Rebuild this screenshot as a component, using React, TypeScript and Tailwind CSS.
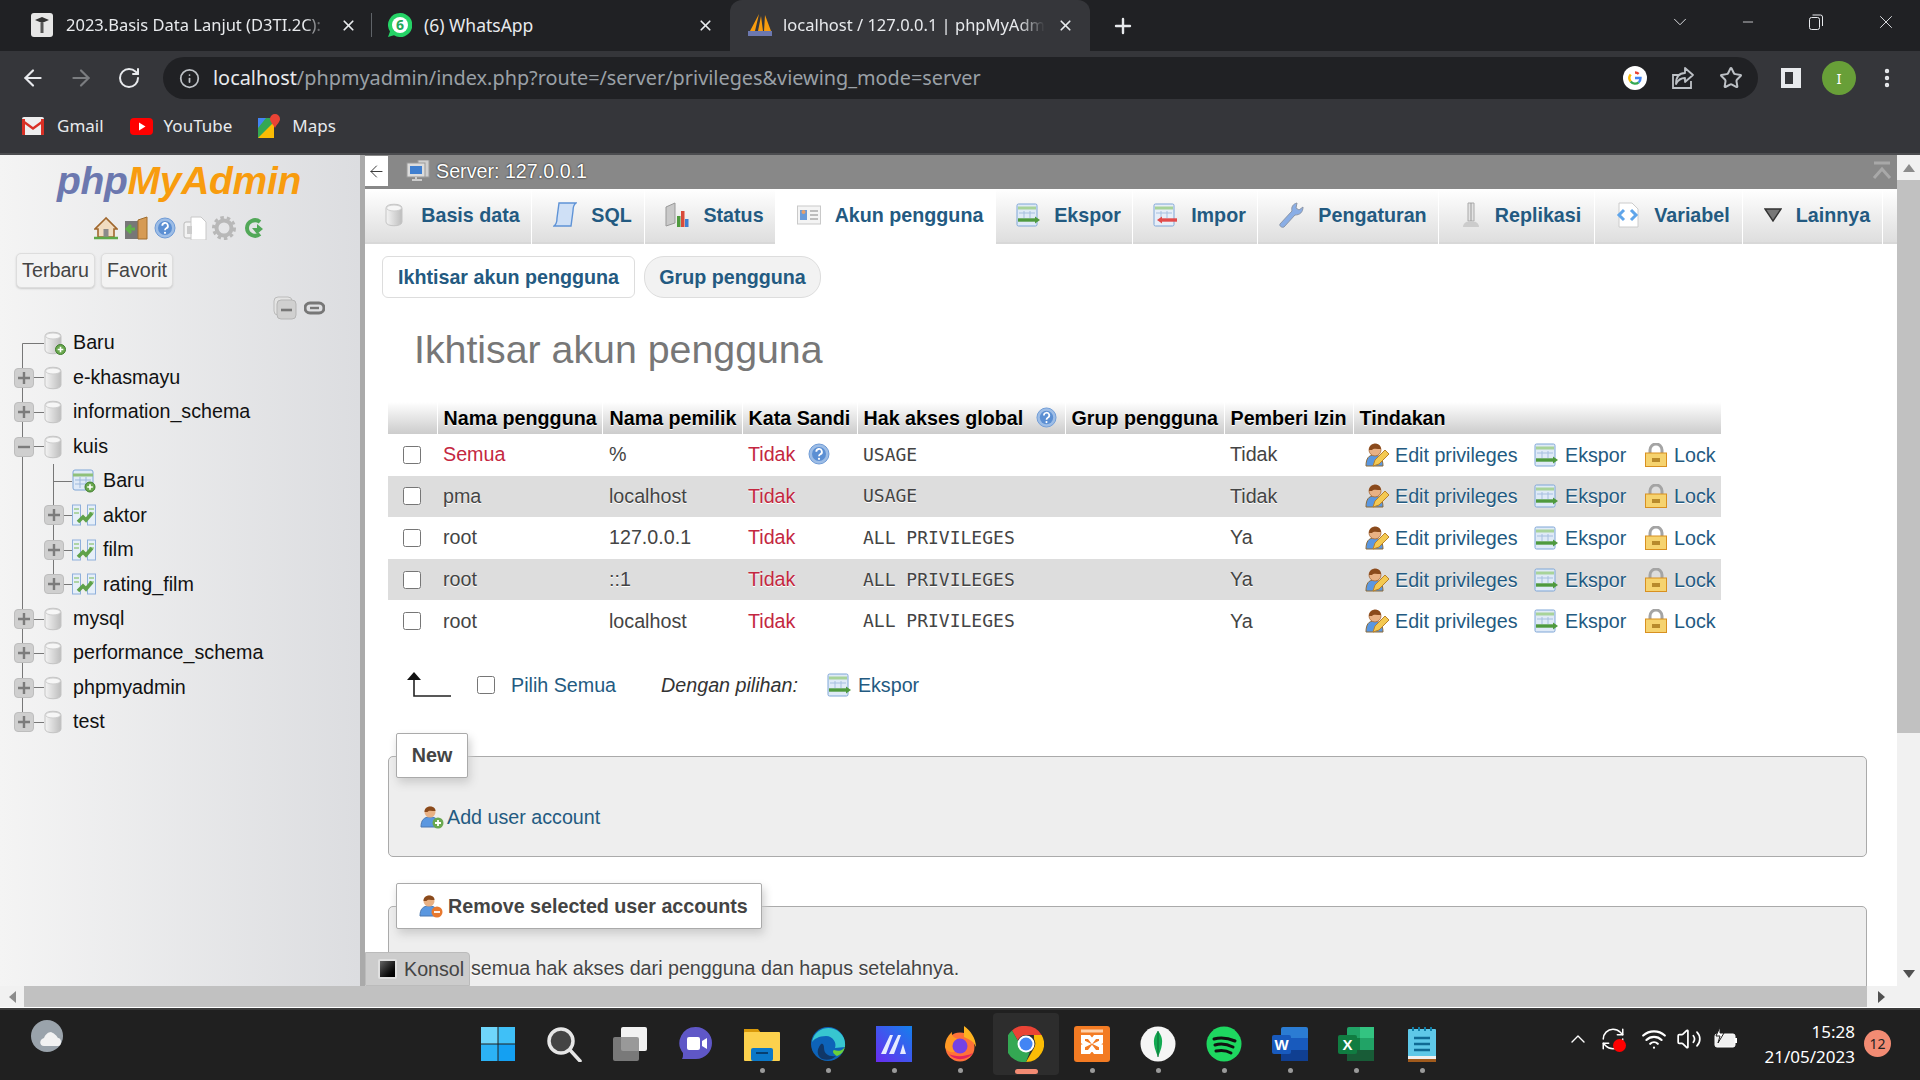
import { X, Plus, ChevronDown, Minus, ArrowLeft, ArrowRight, RotateCw, Info, Star, EllipsisVertical, ChevronUp, Wifi, Volume2, RefreshCw } from 'lucide-react';

const link = 'text-[#235a81]';

function Db({ plus = false }: { plus?: boolean }) {
  return (
    <svg width="22" height="24" viewBox="0 0 22 24" className="shrink-0">
      <defs>
        <linearGradient id="dbg" x1="0" x2="1" y1="0" y2="0">
          <stop offset="0" stopColor="#f4f4f4" />
          <stop offset="1" stopColor="#bdbdbd" />
        </linearGradient>
      </defs>
      <path d="M1 5c0-5 16-5 16 0v14c0 5-16 5-16 0z" fill="url(#dbg)" stroke="#c4c4c4" />
      <ellipse cx="9" cy="5" rx="7.5" ry="3" fill="#f6f6f6" stroke="#cfcfcf" />
      {plus && <circle cx="16.5" cy="18.5" r="5" fill="#6aa84f" stroke="#3f7d2c" />}
      {plus && <path d="M16.5 15.7v5.6M13.7 18.5h5.6" stroke="#fff" strokeWidth="1.6" />}
    </svg>
  );
}

function NewTable() {
  return (
    <svg width="24" height="24" viewBox="0 0 24 24" className="shrink-0">
      <rect x="1" y="1" width="20" height="20" rx="2" fill="#dfeaf7" stroke="#7fa6d6" />
      <path d="M1 6h20" stroke="#8fc07a" strokeWidth="3" />
      <path d="M3 11h16M3 15h16M8 8v11M14 8v11" stroke="#9db9dc" />
      <circle cx="18" cy="18" r="5" fill="#6aa84f" stroke="#3f7d2c" />
      <path d="M18 15.2v5.6M15.2 18h5.6" stroke="#fff" strokeWidth="1.6" />
    </svg>
  );
}

function ViewIcon() {
  return (
    <svg width="24" height="24" viewBox="0 0 24 24" className="shrink-0">
      <rect x="0.5" y="2" width="8" height="20" fill="#e6eff9" stroke="#8fb0dc" />
      <rect x="15.5" y="2" width="8" height="20" fill="#e6eff9" stroke="#8fb0dc" />
      <path d="M2 6h5M17 6h5M2 10h5M17 10h5" stroke="#9ccc8b" strokeWidth="1.4" />
      <path d="M6 19l5-5 3 3 6-7" fill="none" stroke="#5fa24a" strokeWidth="3.6" />
    </svg>
  );
}

function Expander({ open = false }: { open?: boolean }) {
  return (
    <span className="relative z-10 flex h-[20px] w-[20px] items-center justify-center rounded-[4px] border border-[#bdbdbd] bg-[#cfcfcf]">
      <svg width="12" height="12" viewBox="0 0 12 12">
        <path d={open ? 'M0 6h12' : 'M0 6h12M6 0v12'} stroke="#7c7c7c" strokeWidth="2.4" />
      </svg>
    </span>
  );
}

type TreeRow = { name: string; kind: 'newdb' | 'db' | 'open' | 'newtable' | 'view'; last?: boolean };

const tree: TreeRow[] = [
  { name: 'Baru', kind: 'newdb' },
  { name: 'e-khasmayu', kind: 'db' },
  { name: 'information_schema', kind: 'db' },
  { name: 'kuis', kind: 'open' },
  { name: 'Baru', kind: 'newtable' },
  { name: 'aktor', kind: 'view' },
  { name: 'film', kind: 'view' },
  { name: 'rating_film', kind: 'view', last: true },
  { name: 'mysql', kind: 'db' },
  { name: 'performance_schema', kind: 'db' },
  { name: 'phpmyadmin', kind: 'db' },
  { name: 'test', kind: 'db', last: true },
];

function Guides({ row }: { row: TreeRow }) {
  const nested = row.kind === 'newtable' || row.kind === 'view';
  return (
    <svg width="72" height="35" viewBox="0 0 72 35" className="absolute left-0 top-0">
      <path
        d={row.kind === 'newdb' ? 'M22.5 17.5V35' : row.kind === 'db' && row.last ? 'M22.5 0V17.5' : 'M22.5 0V35'}
        stroke="#777"
        fill="none"
      />
      {!nested && <path d="M22.5 17.5H44" stroke="#777" />}
      {nested && <path d={row.last ? 'M53.5 0V17.5' : 'M53.5 0V35'} stroke="#777" />}
      {nested && <path d="M53.5 17.5H72" stroke="#777" />}
    </svg>
  );
}

function Sidebar() {
  return (
    <aside className="w-[365px] shrink-0 border-r-[5px] border-[#aaaaaa] bg-linear-to-r from-[#f4f4f4] to-[#dcdde0]">
      <div className="h-[53px] pl-[57px] pt-[3px] text-[39px] leading-[46px] font-bold italic tracking-[-0.3px]">
        <span className="text-[#6c78af]">php</span>
        <span className="text-[#f89c0e]">MyAdmin</span>
      </div>
      <div className="flex h-[45px] items-center pb-[5px] pl-[94px]">
        <svg width="24" height="24" viewBox="0 0 24 24" className="mr-[6px]">
          <path d="M12 2L1 13h3v8h16v-8h3z" fill="#f1dcc0" stroke="#a0672d" strokeWidth="1.6" />
          <rect x="9.5" y="13" width="5" height="8" fill="#8a8a8a" />
          <path d="M0 22h24" stroke="#5ea849" strokeWidth="2.5" />
        </svg>
        <svg width="24" height="24" viewBox="0 0 24 24" className="mr-[6px]">
          <rect x="1" y="5" width="14" height="18" fill="#777" />
          <path d="M14 4l9-3v22h-9z" fill="#d69b54" stroke="#a06c2c" />
          <path d="M11 13H3M7 9l-4 4 4 4" stroke="#5fb04a" strokeWidth="3" fill="none" />
        </svg>
        <HelpIcon size={22} className="mr-[7px]" />
        <svg width="24" height="24" viewBox="0 0 24 24" className="mr-[5px]">
          <rect x="1" y="6" width="12" height="16" rx="2" fill="#f3f3f3" stroke="#bbb" />
          <path d="M8 1h10l5 5v18H8z" fill="#fff" stroke="#c8c8c8" />
          <rect x="4" y="10" width="5" height="8" fill="#ccc" />
        </svg>
        <svg width="24" height="24" viewBox="0 0 24 24" className="mr-[8px]">
          <circle cx="12" cy="12" r="7.5" fill="none" stroke="#b8b8b8" strokeWidth="4" />
          <circle cx="12" cy="12" r="10.5" fill="none" stroke="#b8b8b8" strokeWidth="3" strokeDasharray="3.5 3" />
        </svg>
        <svg width="20" height="22" viewBox="0 0 20 22">
          <path d="M16 5A8 8 0 0 0 3 11a8 8 0 0 0 13 6" fill="none" stroke="#52a858" strokeWidth="4" />
          <path d="M8 11h5v-4l6 5-6 5z" fill="#52a858" />
        </svg>
      </div>
      <div className="flex gap-[6px] pl-[16px] text-[19.7px] text-[#444]">
        <span className="flex h-[35px] w-[79px] items-center justify-center rounded-[5px] border border-[#ddd] bg-[#f3f3f3] shadow-[0_1px_2px_#ccc]">Terbaru</span>
        <span className="flex h-[35px] w-[72px] items-center justify-center rounded-[5px] border border-[#ddd] bg-[#f3f3f3] shadow-[0_1px_2px_#ccc]">Favorit</span>
      </div>
      <div className="flex h-[40px] items-center gap-[7px] pl-[273px]">
        <svg width="24" height="24" viewBox="0 0 24 24">
          <rect x="1" y="1" width="18" height="18" rx="4" fill="#e4e4e4" stroke="#bbb" />
          <rect x="4" y="4" width="19" height="19" rx="4" fill="#d0d0d0" stroke="#b5b5b5" />
          <path d="M8 14h11" stroke="#777" strokeWidth="2.6" />
        </svg>
        <svg width="21" height="14" viewBox="0 0 21 14">
          <rect x="1" y="2" width="19" height="10" rx="5" fill="none" stroke="#777" strokeWidth="3" />
          <path d="M6 7h9" stroke="#777" strokeWidth="2.4" />
        </svg>
      </div>
      <div className="-mt-[2px] text-[19.7px] text-[#111]">
        {tree.map((row, i) => {
          const nested = row.kind === 'newtable' || row.kind === 'view';
          return (
            <div key={i} className="relative flex h-[34.45px] items-center">
              <Guides row={row} />
              <div className="flex w-[44px] shrink-0 justify-end pr-[10px]">
                {(row.kind === 'db' || row.kind === 'open') && <Expander open={row.kind === 'open'} />}
              </div>
              {nested && (
                <div className="flex w-[28px] shrink-0">
                  {row.kind === 'view' && <Expander />}
                </div>
              )}
              <div className={nested ? 'relative w-[31px]' : 'relative w-[29px]'}>
                {row.kind === 'newdb' && <Db plus />}
                {(row.kind === 'db' || row.kind === 'open') && <Db />}
                {row.kind === 'newtable' && <NewTable />}
                {row.kind === 'view' && <ViewIcon />}
              </div>
              <span className="relative">{row.name}</span>
            </div>
          );
        })}
      </div>
    </aside>
  );
}

function HelpIcon({ size = 22, className = '' }: { size?: number; className?: string }) {
  return (
    <svg width={size} height={size} viewBox="0 0 22 22" className={`shrink-0 ${className}`}>
      <circle cx="11" cy="11" r="10" fill="#9dbde6" stroke="#6f9bd6" />
      <circle cx="11" cy="11" r="7" fill="#5b8fd3" />
      <path d="M8.3 8.8a2.8 2.8 0 1 1 4 2.5c-1 .6-1.3 1-1.3 2" fill="none" stroke="#fff" strokeWidth="1.8" />
      <circle cx="11" cy="15.8" r="1.1" fill="#fff" />
    </svg>
  );
}

function ExportIcon() {
  return (
    <svg width="24" height="24" viewBox="0 0 24 24" className="shrink-0">
      <rect x="1" y="1" width="20" height="22" rx="1.5" fill="#dfeaf7" stroke="#7fa6d6" />
      <path d="M2 5h18" stroke="#a8d39a" strokeWidth="3" />
      <path d="M3 10h16M8 8v7M14 8v7" stroke="#a6bfdf" />
      <path d="M2 17h17" stroke="#4f9a3e" strokeWidth="3.4" />
      <path d="M19 13.5l5 3.5-5 3.5z" fill="#4f9a3e" />
    </svg>
  );
}

function EditIcon() {
  return (
    <svg width="24" height="24" viewBox="0 0 24 24" className="shrink-0">
      <path d="M1 23c0-8 3-11 8-11s9 3 9 11z" fill="#5a97e0" stroke="#8a6a3a" />
      <circle cx="10" cy="7" r="6" fill="#e9b184" stroke="#a56a3a" strokeWidth="0.8" />
      <path d="M4 7c0-8 12-8 12-1-4 0-8-1-9 1z" fill="#8a4a1c" />
      <path d="M8 23l2-6 10-10 4 4-10 10z" fill="#f4c951" stroke="#b9812a" />
    </svg>
  );
}

function LockIcon() {
  return (
    <svg width="22" height="24" viewBox="0 0 22 24" className="shrink-0">
      <path d="M5 12V7a6 6 0 0 1 12 0v5" fill="none" stroke="#a4a4a4" strokeWidth="3" />
      <rect x="0.5" y="10" width="21" height="13.5" fill="#f6d36f" stroke="#d89020" />
      <rect x="7" y="15" width="8" height="4" fill="#b88a2c" />
    </svg>
  );
}

function UserIcon({ badge }: { badge: string }) {
  return (
    <svg width="24" height="24" viewBox="0 0 24 24" className="shrink-0">
      <path d="M1 22c0-7 3-10 9-10s9 3 9 10z" fill="#5a97e0" stroke="#4a77b0" />
      <circle cx="10" cy="7" r="5.5" fill="#e9b184" />
      <path d="M4.5 7c0-7 11-7 11-1-4 0-7-1-8 1z" fill="#8a4a1c" />
      <circle cx="18" cy="18" r="5.5" fill={badge} />
      <path d={badge === '#6aa84f' ? 'M18 15v6M15 18h6' : 'M15 18h6'} stroke="#fff" strokeWidth="1.8" />
    </svg>
  );
}

const navTabs = [
  { label: 'Basis data', w: 'w-[167px]', icon: 'db' },
  { label: 'SQL', w: 'w-[113px]', icon: 'sql' },
  { label: 'Status', w: 'w-[131px]', icon: 'status' },
  { label: 'Akun pengguna', w: 'w-[220px]', icon: 'user', active: true },
  { label: 'Ekspor', w: 'w-[137px]', icon: 'export' },
  { label: 'Impor', w: 'w-[125px]', icon: 'import' },
  { label: 'Pengaturan', w: 'w-[181px]', icon: 'wrench' },
  { label: 'Replikasi', w: 'w-[156px]', icon: 'rep' },
  { label: 'Variabel', w: 'w-[148px]', icon: 'var' },
  { label: 'Lainnya', w: 'w-[140px]', icon: 'more' },
];

function NavIcon({ name }: { name: string }) {
  if (name === 'db') return <Db />;
  if (name === 'export') return <ExportIcon />;
  if (name === 'sql')
    return (
      <svg width="24" height="26" viewBox="0 0 24 26" className="shrink-0">
        <path d="M6 1h17c-3 2-3 5-3 8l-2 15H1c3-2 3-5 3-8z" fill="#cfe0f6" stroke="#5f93d6" strokeWidth="1.4" />
      </svg>
    );
  if (name === 'status')
    return (
      <svg width="24" height="26" viewBox="0 0 24 26" className="shrink-0">
        <path d="M1 5l9-4v20l-9 3z" fill="#c9c9c9" stroke="#999" />
        <rect x="12" y="14" width="3.5" height="11" fill="#4f9a3e" />
        <rect x="16" y="9" width="3.5" height="16" fill="#d94a3a" />
        <rect x="20" y="17" width="3.5" height="8" fill="#3f7fd0" />
      </svg>
    );
  if (name === 'user')
    return (
      <svg width="24" height="20" viewBox="0 0 24 20" className="shrink-0">
        <rect x="0.5" y="1" width="23" height="18" fill="#f4f4f4" stroke="#c9c9c9" />
        <rect x="3" y="5" width="7" height="10" fill="#6b9bd8" />
        <circle cx="6.5" cy="7" r="2" fill="#e9a06a" />
        <path d="M13 6h8M13 10h8M13 14h8" stroke="#aaa" strokeWidth="1.6" />
      </svg>
    );
  if (name === 'import')
    return (
      <svg width="24" height="24" viewBox="0 0 24 24" className="shrink-0">
        <rect x="1" y="1" width="20" height="22" rx="1.5" fill="#e7eef8" stroke="#7fa6d6" />
        <path d="M2 5h18" stroke="#a8d39a" strokeWidth="3" />
        <path d="M3 10h16M8 8v7M14 8v7" stroke="#a6bfdf" />
        <path d="M9 17h15" stroke="#e24a4a" strokeWidth="3.4" />
        <path d="M9 13.5l-5 3.5 5 3.5z" fill="#e24a4a" />
      </svg>
    );
  if (name === 'wrench')
    return (
      <svg width="26" height="26" viewBox="0 0 26 26" className="shrink-0">
        <path d="M2 22L14 9c-1-4 1-7 5-8l-1 5 3 2 4-3c0 5-3 8-8 8L6 25c-2 1-5-1-4-3z" fill="#8aaee6" stroke="#8b96a8" />
      </svg>
    );
  if (name === 'rep')
    return (
      <svg width="20" height="26" viewBox="0 0 20 26" className="shrink-0">
        <path d="M7 1h6v18H7z" fill="#e3e3e3" stroke="#aaa" />
        <path d="M10 1v18" stroke="#999" />
        <path d="M2 25c0-4 4-6 8-6s8 2 8 6z" fill="#ccc" />
      </svg>
    );
  if (name === 'var')
    return (
      <svg width="24" height="26" viewBox="0 0 24 26" className="shrink-0">
        <path d="M3 1h13l6 6v18H3z" fill="#fff" stroke="#ccc" />
        <path d="M8 8l-5 5 5 5M15 8l5 5-5 5" fill="none" stroke="#5fa5ea" strokeWidth="3" />
      </svg>
    );
  return (
    <svg width="18" height="14" viewBox="0 0 18 14" className="shrink-0">
      <path d="M1 1h16L9 13z" fill="#777" stroke="#333" strokeWidth="1.4" />
    </svg>
  );
}

function Main() {
  return (
    <main className="relative flex w-[1532px] flex-col overflow-hidden bg-white text-[19.7px] leading-[24px] text-[#444]">
      <div className="flex h-[34px] shrink-0 items-center bg-[#888888] pb-[2px] text-white [text-shadow:0_0_2px_#000]">
        <span className="flex h-[30px] w-[23px] items-center justify-center bg-white text-[#333]">
          <ArrowLeft size={19} strokeWidth={1.2} />
        </span>
        <svg width="24" height="22" viewBox="0 0 24 22" className="ml-[18px]">
          <rect x="12" y="0" width="11" height="17" fill="#cfcfcf" stroke="#999" />
          <rect x="1" y="3" width="18" height="14" fill="#dcdcdc" stroke="#999" />
          <rect x="4" y="6" width="12" height="8" fill="#3f7fd0" />
          <path d="M6 20h10M10 17v3" stroke="#ccc" strokeWidth="2" />
        </svg>
        <span className="ml-[6px]">Server: 127.0.0.1</span>
        <svg width="20" height="20" viewBox="0 0 20 20" className="ml-auto mr-[5px]">
          <path d="M2 2h16" stroke="#a8a8a8" strokeWidth="3" />
          <path d="M2 17l8-9 8 9" stroke="#a8a8a8" strokeWidth="3" fill="none" />
        </svg>
      </div>
      <nav className="flex h-[55px] shrink-0 border-b-2 border-[#d8d8d8] bg-linear-to-b from-white to-[#dedede] font-bold text-[#235a81]">
        {navTabs.map((t) => (
          <div
            key={t.label}
            className={`${t.w} flex h-[55px] shrink-0 items-center justify-center gap-[14px] border-r border-white pb-[4px] pl-[9px] ${t.active ? 'bg-white' : ''}`}
          >
            <NavIcon name={t.icon} />
            <span>{t.label}</span>
          </div>
        ))}
      </nav>
      <div className="ml-[17px] mt-[12px] flex shrink-0 gap-[9px] font-bold text-[#235a81]">
        <span className="flex h-[42px] w-[253px] items-center justify-center rounded-[6px] border border-[#dddddd] bg-white">Ikhtisar akun pengguna</span>
        <span className="flex h-[42px] w-[177px] items-center justify-center rounded-[20px] border border-[#dddddd] bg-[#f2f2f2]">Grup pengguna</span>
      </div>
      <h1 className="ml-[49px] mt-[28px] shrink-0 text-[39.3px] leading-[46px] font-normal text-[#777777]">Ikhtisar akun pengguna</h1>
      <table className="ml-[23px] mt-[30px] w-[1333px] shrink-0 table-fixed border-collapse">
        <colgroup>
          <col className="w-[49px]" />
          <col className="w-[165px]" />
          <col className="w-[140px]" />
          <col className="w-[115px]" />
          <col className="w-[208px]" />
          <col className="w-[159px]" />
          <col className="w-[129px]" />
          <col className="w-[368px]" />
        </colgroup>
        <thead>
          <tr className="h-[32px] bg-linear-to-b from-white to-[#cccccc] text-left font-bold text-black [text-shadow:0_1px_0_#fff]">
            <th className="border-r border-white pb-[1px]" />
            <th className="border-r border-white pb-[1px] pl-[6px] font-bold whitespace-nowrap">Nama pengguna</th>
            <th className="border-r border-white pb-[1px] pl-[7px] font-bold whitespace-nowrap">Nama pemilik</th>
            <th className="border-r border-white pb-[1px] pl-[6px] font-bold whitespace-nowrap">Kata Sandi</th>
            <th className="border-r border-white pb-[1px] pl-[6px] font-bold whitespace-nowrap">
              <span className="flex items-center gap-[13px]">Hak akses global <HelpIcon size={21} /></span>
            </th>
            <th className="border-r border-white pb-[1px] pl-[6px] font-bold whitespace-nowrap">Grup pengguna</th>
            <th className="border-r border-white pb-[1px] pl-[6px] font-bold whitespace-nowrap">Pemberi Izin</th>
            <th className="pb-[1px] pl-[6px] font-bold">Tindakan</th>
          </tr>
        </thead>
        <tbody>
          {[
            { user: 'Semua', host: '%', priv: 'USAGE', grant: 'Tidak', red: true, help: true },
            { user: 'pma', host: 'localhost', priv: 'USAGE', grant: 'Tidak' },
            { user: 'root', host: '127.0.0.1', priv: 'ALL PRIVILEGES', grant: 'Ya' },
            { user: 'root', host: '::1', priv: 'ALL PRIVILEGES', grant: 'Ya' },
            { user: 'root', host: 'localhost', priv: 'ALL PRIVILEGES', grant: 'Ya' },
          ].map((r, i) => (
            <tr key={i} className={`h-[41.6px] ${i % 2 === 1 ? 'bg-[#dddddd] [text-shadow:0_1px_0_#fff]' : ''}`}>
              <td className="pl-[15px]">
                <input type="checkbox" className="block h-[18px] w-[18px]" />
              </td>
              <td className={`pb-[1px] pl-[6px] ${r.red ? 'text-[#c4273f]' : ''}`}>{r.user}</td>
              <td className="pb-[1px] pl-[7px]">{r.host}</td>
              <td className="pb-[1px] pl-[6px] text-[#c4273f]">
                <span className="flex items-center gap-[13px]">Tidak {r.help && <HelpIcon size={22} />}</span>
              </td>
              <td className="pl-[6px] font-['DejaVu_Sans_Mono',monospace] text-[18px]">{r.priv}</td>
              <td />
              <td className="pb-[1px] pl-[6px]">{r.grant}</td>
              <td>
                <div className={`flex items-center pl-[12px] ${link}`}>
                  <span className="flex w-[169px] items-center gap-[6px]"><EditIcon />Edit privileges</span>
                  <span className="flex w-[111px] items-center gap-[7px]"><ExportIcon />Ekspor</span>
                  <span className="flex items-center gap-[7px]"><LockIcon />Lock</span>
                </div>
              </td>
            </tr>
          ))}
        </tbody>
      </table>
      <div className="ml-[42px] mt-[28px] flex h-[30px] shrink-0 items-center">
        <svg width="44" height="26" viewBox="0 0 44 26" className="mr-[26px]">
          <path d="M7 6v18h37" fill="none" stroke="#222" strokeWidth="1.6" />
          <path d="M0 8l7-8 7 8z" fill="#111" />
        </svg>
        <input type="checkbox" className="block h-[18px] w-[18px]" />
        <span className={`ml-[16px] ${link}`}>Pilih Semua</span>
        <span className="ml-[45px] italic text-[#333]">Dengan pilihan:</span>
        <span className={`ml-[29px] flex items-center gap-[7px] ${link}`}><ExportIcon />Ekspor</span>
      </div>
      <div className="ml-[23px] mt-[33px] w-[1479px] shrink-0">
        <div className="relative z-10 -mb-[22px] ml-[8px] flex h-[45px] w-[72px] items-center justify-center rounded-[2px] border border-[#aaaaaa] bg-white font-bold shadow-[2px_5px_10px_#ccc]">New</div>
        <div className={`flex h-[101px] items-start rounded-[5px] border border-[#aaaaaa] bg-[#eeeeee] pl-[31px] pt-[48px] ${link}`}>
          <span className="flex items-center gap-[3px]"><UserIcon badge="#6aa84f" />Add user account</span>
        </div>
      </div>
      <div className="ml-[23px] mt-[26px] w-[1479px] shrink-0">
        <div className="relative z-10 -mb-[23px] ml-[8px] flex h-[46px] w-[366px] items-center rounded-[2px] border border-[#aaaaaa] bg-white pl-[22px] font-bold shadow-[2px_5px_10px_#ccc]">
          <span className="flex items-center gap-[5px]"><UserIcon badge="#e8792f" />Remove selected user accounts</span>
        </div>
        <div className="h-[120px] rounded-[5px] border border-[#aaaaaa] bg-[#eeeeee] pl-[82px] pt-[49px] [text-shadow:0_1px_0_#fff]">
          semua hak akses dari pengguna dan hapus setelahnya.
        </div>
      </div>
      <div className="absolute bottom-0 left-0 flex h-[34px] w-[105px] items-center gap-[7px] rounded-tr-[4px] border border-[#bbbbbb] bg-[#cccccc] pl-[12px]">
        <span className="h-[20px] w-[19px] rounded-[2px] border-2 border-[#e0e0e0] bg-linear-to-br from-[#666] to-black" />
        <span>Konsol</span>
      </div>
    </main>
  );
}

function ChromeTabs() {
  return (
    <div className="flex h-[51px] shrink-0 items-end bg-[#202124] font-['Noto_Sans',sans-serif] text-[16.5px] text-[#e8eaed]">
      <div className="flex h-[51px] w-[371px] items-center pb-[1px] pl-[30px]">
        <svg width="24" height="24" viewBox="0 0 24 24" className="shrink-0">
          <rect x="1" y="0" width="22" height="24" rx="3" fill="#e6e6e6" />
          <path d="M5 7l7-3 7 3-7 3z" fill="#333" />
          <path d="M12 10v10" stroke="#555" strokeWidth="3" />
        </svg>
        <span className="ml-[12px] w-[260px] overflow-hidden whitespace-nowrap [mask-image:linear-gradient(to_right,black_92%,transparent)]">2023.Basis Data Lanjut (D3TI.2C):</span>
        <X size={17} strokeWidth={2.4} className="ml-[14px] shrink-0" />
      </div>
      <div className="mb-[14px] h-[24px] w-px bg-[#5f6368]" />
      <div className="flex h-[51px] w-[358px] items-center pb-[1px] pl-[16px]">
        <svg width="24" height="24" viewBox="0 0 24 24" className="shrink-0">
          <path d="M12 0a12 12 0 0 0-10 18.500L0 24l6-1.800A12 12 0 1 0 12 0z" fill="#25d366" />
          <circle cx="12" cy="12" r="8" fill="#fff" />
          <text x="12" y="17" textAnchor="middle" fontSize="14" fontWeight="700" fill="#25a85a">6</text>
        </svg>
        <span className="ml-[12px] text-[17.5px]">(6) WhatsApp</span>
        <X size={17} strokeWidth={2.4} className="ml-auto mr-[16px] shrink-0" />
      </div>
      <div className="flex h-[51px] w-[360px] items-center rounded-t-[12px] bg-[#35363a] pb-[1px] pl-[17px]">
        <svg width="26" height="24" viewBox="0 0 26 24" className="shrink-0">
          <path d="M12 1L3 18h5zM14 3l-3 15h5zM18 2l-1 16h7z" fill="#f89c0e" />
          <path d="M1 18h24v5H1z" fill="#6c78af" />
        </svg>
        <span className="ml-[10px] w-[262px] overflow-hidden whitespace-nowrap [mask-image:linear-gradient(to_right,black_90%,transparent)]">localhost / 127.0.0.1 | phpMyAdmin</span>
        <X size={17} strokeWidth={2.4} className="ml-[12px] shrink-0" />
      </div>
      <div className="flex h-[51px] w-[66px] items-center justify-center">
        <Plus size={24} strokeWidth={2.4} />
      </div>
      <div className="ml-auto flex h-[44px] items-center self-start text-[#e8eaed]">
        <ChevronDown size={22} strokeWidth={1} className="mr-[49px]" />
        <Minus size={16} strokeWidth={1.2} className="mr-[52px]" />
        <svg width="16" height="16" viewBox="0 0 16 16" className="mr-[51px]">
          <rect x="1.500" y="3.500" width="10" height="12" rx="2" fill="none" stroke="#e8eaed" />
          <path d="M4.500 1h8a2 2 0 0 1 2 2v9" fill="none" stroke="#e8eaed" />
        </svg>
        <X size={22} strokeWidth={1} className="mr-[23px]" />
      </div>
    </div>
  );
}

function Toolbar() {
  return (
    <div className="flex h-[54px] shrink-0 items-center bg-[#35363a] text-[#dadce0]">
      <div className="flex w-[163px] shrink-0 items-center pl-[20px]">
        <ArrowLeft size={26} strokeWidth={2} className="text-[#e8eaed]" />
        <ArrowRight size={26} strokeWidth={2} className="ml-[22px] text-[#7b7d80]" />
        <RotateCw size={24} strokeWidth={2} className="ml-[23px] text-[#e8eaed]" />
      </div>
      <div className="flex h-[42px] w-[1595px] items-center rounded-full bg-[#202124] pl-[16px] font-['Noto_Sans',sans-serif] text-[19.85px]">
        <Info size={21} strokeWidth={2} className="text-[#bdc1c6]" />
        <span className="ml-[13px] text-[#e8eaed]">localhost</span>
        <span className="text-[#9aa0a6]">/phpmyadmin/index.php?route=/server/privileges&amp;viewing_mode=server</span>
        <svg width="24" height="24" viewBox="0 0 24 24" className="ml-auto">
          <circle cx="12" cy="12" r="12" fill="#fff" />
          <path d="M12 6.500a5.500 5.500 0 0 1 3.700 1.400" fill="none" stroke="#ea4335" strokeWidth="2.400" />
          <path d="M7.700 8.500a5.500 5.500 0 0 0 0 7" fill="none" stroke="#fbbc05" strokeWidth="2.400" />
          <path d="M7.700 15.500a5.500 5.500 0 0 0 8 .8" fill="none" stroke="#34a853" strokeWidth="2.400" />
          <path d="M12 12h5.500c0 2-.6 3.300-1.800 4.300" fill="none" stroke="#4285f4" strokeWidth="2.400" />
        </svg>
        <svg width="24" height="24" viewBox="0 0 24 24" className="ml-[24px]">
          <path d="M20 15v7H2V9h6" fill="none" stroke="#bdc1c6" strokeWidth="1.8" />
          <path d="M14 2l8 7-8 7v-4c-5 0-7 2-9 6 0-7 3-11 9-11z" fill="none" stroke="#bdc1c6" strokeWidth="1.8" strokeLinejoin="round" />
        </svg>
        <Star size={24} strokeWidth={2} className="ml-[24px] mr-[15px] text-[#bdc1c6]" />
      </div>
      <svg width="22" height="22" viewBox="0 0 22 22" className="ml-[22px]">
        <path d="M1 1h20v20H1z" fill="#e8eaed" />
        <path d="M5 5h8v12H5z" fill="#35363a" />
      </svg>
      <span className="ml-[20px] flex h-[34px] w-[34px] items-center justify-center rounded-full bg-[#689f38] font-['Noto_Sans',sans-serif] text-[15px] text-white">I</span>
      <EllipsisVertical size={24} strokeWidth={2.4} className="ml-[19px] text-[#e8eaed]" />
    </div>
  );
}

function Bookmarks() {
  return (
    <div className="flex h-[50px] shrink-0 items-center border-b-2 border-[#4c4d50] bg-[#35363a] pb-[6px] pl-[22px] font-['Noto_Sans',sans-serif] text-[17px] text-[#e8eaed]">
      <svg width="22" height="18" viewBox="0 0 22 18">
        <rect y="0" width="22" height="18" rx="2" fill="#eee" />
        <path d="M0 2l11 8 11-8v3l-11 8L0 5z" fill="#d93025" />
        <path d="M0 2h3v16H1a1 1 0 0 1-1-1zM19 2h3v15a1 1 0 0 1-1 1h-2z" fill="#d93025" />
      </svg>
      <span className="ml-[13px]">Gmail</span>
      <svg width="23" height="17" viewBox="0 0 23 17" className="ml-[26px]">
        <rect width="23" height="17" rx="4" fill="#f00" />
        <path d="M9 4.500v8l6.500-4z" fill="#fff" />
      </svg>
      <span className="ml-[11px]">YouTube</span>
      <svg width="22" height="24" viewBox="0 0 22 24" className="ml-[26px]">
        <path d="M0 4h16v20H0z" fill="#34a853" />
        <path d="M0 24L16 8v16z" fill="#fbbc05" />
        <path d="M0 4h8L0 14z" fill="#4285f4" />
        <path d="M17 0a5 5 0 0 1 5 5c0 3-3 5-5 9-2-4-5-6-5-9a5 5 0 0 1 5-5z" fill="#ea4335" />
      </svg>
      <span className="ml-[12px]">Maps</span>
    </div>
  );
}

function VScroll() {
  return (
    <div className="flex w-[23px] shrink-0 flex-col items-center bg-[#f1f1f1]">
      <div className="flex h-[25px] w-full shrink-0 items-center justify-center">
        <svg width="12" height="8" viewBox="0 0 12 8"><path d="M6 0l6 8H0z" fill="#8c8c8c" /></svg>
      </div>
      <div className="h-[553px] w-full shrink-0 bg-[#c1c1c1]" />
      <div className="mt-auto flex h-[25px] w-full shrink-0 items-center justify-center">
        <svg width="12" height="8" viewBox="0 0 12 8"><path d="M0 0h12L6 8z" fill="#505050" /></svg>
      </div>
    </div>
  );
}

function HScroll() {
  return (
    <div className="flex h-[21px] shrink-0 bg-[#f1f1f1]">
      <div className="flex w-[24px] items-center justify-center">
        <svg width="7" height="12" viewBox="0 0 7 12"><path d="M7 0v12L0 6z" fill="#8c8c8c" /></svg>
      </div>
      <div className="w-[1843px] bg-[#c1c1c1]" />
      <div className="flex w-[28px] items-center justify-center">
        <svg width="7" height="12" viewBox="0 0 7 12"><path d="M0 0v12l7-6z" fill="#505050" /></svg>
      </div>
    </div>
  );
}

const appIcons = [
  { key: 'win', dot: false },
  { key: 'search', dot: false },
  { key: 'view', dot: false },
  { key: 'chat', dot: false },
  { key: 'files', dot: true },
  { key: 'edge', dot: true },
  { key: 'fa', dot: true },
  { key: 'fox', dot: true },
  { key: 'chrome', dot: true },
  { key: 'xampp', dot: true },
  { key: 'mongo', dot: true },
  { key: 'spotify', dot: true },
  { key: 'word', dot: true },
  { key: 'excel', dot: true },
  { key: 'note', dot: true },
];

function AppIcon({ name }: { name: string }) {
  const c = 'h-[36px] w-[36px]';
  switch (name) {
    case 'win':
      return (
        <svg viewBox="0 0 36 36" className={c}>
          <path d="M1 1h16.500v16.500H1z" fill="#6fd6fb" />
          <path d="M18.500 1H35v16.500H18.500z" fill="#3fc0f7" />
          <path d="M1 18.500h16.500V35H1z" fill="#2cb2f5" />
          <path d="M18.500 18.500H35V35H18.500z" fill="#14a0f2" />
        </svg>
      );
    case 'search':
      return (
        <svg viewBox="0 0 36 36" className={c}>
          <circle cx="15" cy="15" r="12" fill="#444" stroke="#e6e6e6" strokeWidth="3.500" />
          <path d="M24 24l10 11" stroke="#e6e6e6" strokeWidth="3.500" strokeLinecap="round" />
        </svg>
      );
    case 'view':
      return (
        <svg viewBox="0 0 36 36" className={c}>
          <rect x="9" y="1" width="26" height="24" rx="2" fill="#f2f2f2" />
          <rect x="1" y="11" width="26" height="24" rx="2" fill="#8a8a8a" fillOpacity="0.85" />
        </svg>
      );
    case 'chat':
      return (
        <svg viewBox="0 0 36 36" className={c}>
          <path d="M18 1a16 16 0 0 1 0 32H4c1-2 1-3 1-6A16 16 0 0 1 18 1z" fill="#5f57c7" />
          <rect x="9" y="11" width="13" height="13" rx="2" fill="#fff" />
          <path d="M24 15l5-3v11l-5-3z" fill="#fff" />
        </svg>
      );
    case 'files':
      return (
        <svg viewBox="0 0 36 36" className={c}>
          <path d="M0 3h14l3 4H0z" fill="#d99a0a" />
          <rect y="6" width="36" height="29" rx="1" fill="#fcd14d" />
          <rect x="7" y="22" width="22" height="13" rx="2" fill="#0b78c8" />
          <path d="M12 27h12" stroke="#063f70" strokeWidth="2" />
        </svg>
      );
    case 'edge':
      return (
        <svg viewBox="0 0 36 36" className={c}>
          <circle cx="18" cy="18" r="17" fill="#0d63b8" />
          <path d="M2 16C4 4 16 0 24 3c8 3 12 10 11 18l-10 1c2-5-2-12-9-12-7 0-12 3-14 6z" fill="#37c6d0" />
          <path d="M35 19c0 5-6 7-11 5-2 1-1 4 3 6 6-2 8-7 8-11z" fill="#6ad03b" />
          <path d="M14 22c0 6 5 9 12 8-3 3-8 5-14 3-5-3-6-9-1-15 2-1 3 1 3 4z" fill="#12284c" fillOpacity="0.75" />
        </svg>
      );
    case 'fa':
      return (
        <svg viewBox="0 0 36 36" className={c}>
          <defs>
            <linearGradient id="fa" x1="1" x2="0" y1="0" y2="1">
              <stop offset="0" stopColor="#1481ec" />
              <stop offset="1" stopColor="#6a2cf0" />
            </linearGradient>
          </defs>
          <rect width="36" height="36" fill="url(#fa)" />
          <path d="M5 28L14 9h3L10 28zM13 28L22 9h3l-7 19zM24 28l3-10 3 10z" fill="#e6ecff" />
        </svg>
      );
    case 'fox':
      return (
        <svg viewBox="0 0 36 36" className={c}>
          <circle cx="18" cy="21" r="14.500" fill="#ff7139" />
          <path d="M22 0c6 4 12 12 12 21-3-7-8-8-12-10z" fill="#ffb320" />
          <path d="M3 21C3 12 8 8 10 6c-1 4 3 6 6 7-6 2-7 9-3 13-4 1-9-1-10-5z" fill="#ff9a25" />
          <circle cx="18" cy="20" r="7.500" fill="#7542e5" />
          <path d="M7 28c5 7 18 7 24-1-8 4-18 4-24 1z" fill="#e3245c" />
        </svg>
      );
    case 'chrome':
      return (
        <svg viewBox="0 0 36 36" className={c}>
          <path d="M18 0a18 18 0 0 1 15.600 9H18a9 9 0 0 0-8.300 5.500L4 4.500A18 18 0 0 1 18 0z" fill="#ea4335" />
          <path d="M33.600 9a18 18 0 0 1-15.600 27l7.800-13.500A9 9 0 0 0 26 13l-.1-4z" fill="#fbbc05" />
          <path d="M4 4.500l7.800 13.500a9 9 0 0 0 10 8.100L18 36A18 18 0 0 1 4 4.500z" fill="#34a853" />
          <circle cx="18" cy="18" r="8.500" fill="#fff" />
          <circle cx="18" cy="18" r="6.500" fill="#4285f4" />
        </svg>
      );
    case 'xampp':
      return (
        <svg viewBox="0 0 36 36" className={c}>
          <rect width="36" height="36" rx="3" fill="#f37b23" />
          <path d="M7 5h22" stroke="#ffd0a8" strokeWidth="3" />
          <path d="M9 11h6l3 4 3-4h6v5l-4 2 4 2v6h-6l-3-4-3 4H9v-6l4-2-4-2z" fill="none" stroke="#fff" strokeWidth="4" />
        </svg>
      );
    case 'mongo':
      return (
        <svg viewBox="0 0 36 36" className={c}>
          <circle cx="18" cy="18" r="17.500" fill="#f5f5f5" />
          <path d="M18 5c5 6 6 12 0 26-6-14-5-20 0-26z" fill="#13aa52" />
          <path d="M18 5v26" stroke="#0c6b35" />
        </svg>
      );
    case 'spotify':
      return (
        <svg viewBox="0 0 36 36" className={c}>
          <circle cx="18" cy="18" r="17.500" fill="#1ed760" />
          <path d="M8 13c7-2 14-1 21 2M9 19c6-2 12-1 18 2M10 25c5-1 10-1 15 2" fill="none" stroke="#111" strokeWidth="3" strokeLinecap="round" />
        </svg>
      );
    case 'word':
      return (
        <svg viewBox="0 0 36 36" className={c}>
          <rect x="9" y="1" width="27" height="34" rx="2" fill="#2b7cd3" />
          <rect x="9" y="12" width="27" height="12" fill="#185abd" />
          <rect x="9" y="24" width="27" height="11" fill="#103f91" />
          <rect x="0" y="9" width="19" height="19" rx="2" fill="#185abd" />
          <text x="9.500" y="24" textAnchor="middle" fontSize="15" fontWeight="700" fill="#fff">W</text>
        </svg>
      );
    case 'excel':
      return (
        <svg viewBox="0 0 36 36" className={c}>
          <rect x="9" y="1" width="27" height="34" rx="2" fill="#21a366" />
          <rect x="22" y="1" width="14" height="11" fill="#33c481" />
          <rect x="9" y="12" width="13" height="12" fill="#107c41" />
          <rect x="9" y="24" width="27" height="11" fill="#185c37" />
          <rect x="0" y="9" width="19" height="19" rx="2" fill="#107c41" />
          <text x="9.500" y="24" textAnchor="middle" fontSize="15" fontWeight="700" fill="#fff">X</text>
        </svg>
      );
    default:
      return (
        <svg viewBox="0 0 36 36" className={c}>
          <rect x="4" y="3" width="28" height="33" rx="1" fill="#5ec8e8" />
          <rect x="4" y="30" width="28" height="3" fill="#f0f0f0" />
          <rect x="4" y="33" width="28" height="3" fill="#a05a1c" />
          <path d="M9 1v4M15 1v4M21 1v4M27 1v4" stroke="#0f7ea8" strokeWidth="2" />
          <path d="M10 12h16M10 18h16M10 24h16" stroke="#0f6a94" strokeWidth="2.400" />
        </svg>
      );
  }
}

function Taskbar() {
  return (
    <div className="flex h-[72px] shrink-0 items-start border-t-2 border-[#3a3a3a] bg-[#202020] text-white">
      <svg width="34" height="36" viewBox="0 0 34 36" className="ml-[31px] mt-[10px] shrink-0">
        <circle cx="16" cy="16" r="16" fill="#9aa3ab" />
        <path d="M20 12c4 2 5 3 7 6 4 0 4 8 0 8H13c-5 0-5-7 0-8 1-3 4-6 7-6z" fill="#f2f2f2" />
      </svg>
      <div className="ml-[400px] flex shrink-0">
        {appIcons.map((a) => (
          <div
            key={a.key}
            className={`relative mt-[3px] flex h-[62px] w-[66px] flex-col items-center justify-start rounded-[4px] pt-[13px] ${a.key === 'chrome' ? 'bg-[#2d2d2d]' : ''}`}
          >
            <AppIcon name={a.key} />
            {a.key === 'chrome' ? (
              <span className="absolute bottom-[1px] h-[5px] w-[23px] rounded-full bg-[#f28b73]" />
            ) : (
              a.dot && <span className="absolute bottom-[2px] h-[5px] w-[5px] rounded-full bg-[#9a9a9a]" />
            )}
          </div>
        ))}
      </div>
      <div className="ml-[111px] mt-[16px] flex shrink-0 items-center">
        <ChevronUp size={24} strokeWidth={1.4} />
        <span className="relative ml-[10px]">
          <RefreshCw size={26} strokeWidth={1.4} />
          <span className="absolute bottom-0 right-0 h-[13px] w-[13px] rounded-full bg-[#ff0000]" />
        </span>
        <Wifi size={26} strokeWidth={2} className="ml-[15px]" />
        <Volume2 size={26} strokeWidth={1.6} className="ml-[9px]" />
        <svg width="26" height="26" viewBox="0 0 26 26" className="ml-[10px]">
          <rect x="3" y="8" width="20" height="13" rx="2" fill="#f0f0f0" stroke="#fff" />
          <path d="M23 12h2v5h-2" fill="#fff" />
          <path d="M8 1L4 10h4l-2 7 6-10H8z" fill="#fff" stroke="#202020" strokeWidth="1" />
        </svg>
      </div>
      <div className="ml-[17px] mt-[9px] flex w-[100px] shrink-0 flex-col items-end font-['Noto_Sans',sans-serif] text-[17px] leading-[25px]">
        <span>15:28</span>
        <span>21/05/2023</span>
      </div>
      <span className="ml-[9px] mt-[20px] flex h-[27px] w-[27px] shrink-0 items-center justify-center rounded-full bg-[#f28b73] font-['Noto_Sans',sans-serif] text-[14px] text-[#222]">12</span>
    </div>
  );
}

export default function App() {
  return (
    <div className="flex h-[1080px] w-[1920px] flex-col overflow-hidden bg-white font-['Liberation_Sans',Arial,sans-serif]">
      <ChromeTabs />
      <Toolbar />
      <Bookmarks />
      <div className="flex h-[831px] shrink-0">
        <Sidebar />
        <Main />
        <VScroll />
      </div>
      <HScroll />
      <div className="h-px shrink-0 bg-white" />
      <Taskbar />
    </div>
  );
}
